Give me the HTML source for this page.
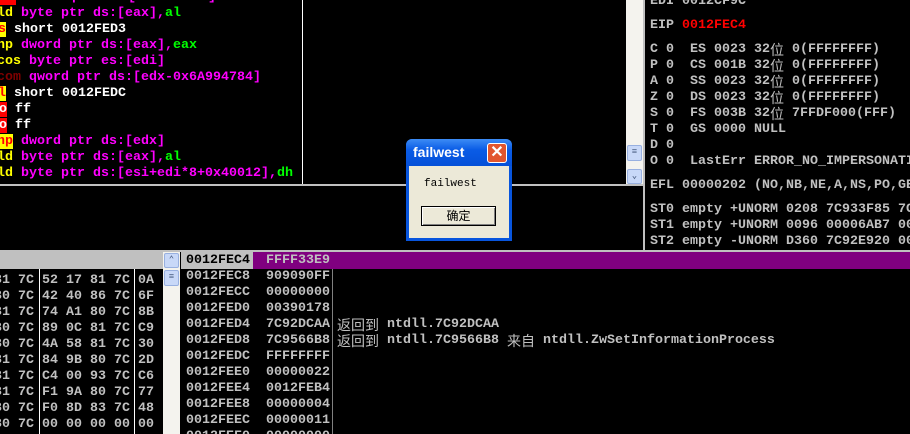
<!DOCTYPE html>
<html><head><meta charset="utf-8"><style>
*{margin:0;padding:0;box-sizing:border-box}
html{width:910px;height:434px;overflow:hidden}
body{width:910px;height:434px;background:#000;overflow:hidden;position:relative;font-family:"Liberation Mono","Noto Sans CJK SC",monospace;font-weight:bold;font-size:13.33px;}
.a{position:absolute;white-space:pre;line-height:16px;height:16px;overflow:visible}
.m{color:#ff00ff}.g{color:#00ff00}.w{color:#fff}.y{color:#ffff00}.r{color:#ff0000}.s{color:#c0c0c0}
.cjk{font-family:"Noto Sans CJK SC",sans-serif;font-weight:normal;font-size:14px;line-height:16px;display:inline-block;height:16px;vertical-align:top;overflow:hidden}
</style></head><body>
<!-- disasm -->
<div class="a" style="left:0;top:-10px"><span style="background:#ff0000;color:#ffff00">ll</span> <span class="m">dword ptr ds:[eax-0x6F0]</span></div>
<div class="a" style="left:-3px;top:6px"><span class="y">ld</span> <span class="m">byte ptr ds:[eax]</span><span class="m">,</span><span class="g">al</span></div>
<div class="a" style="left:-2px;top:22px"><span style="background:#ffff00;color:#ff0000">s</span> <span class="w">short 0012FED3</span></div>
<div class="a" style="left:-3px;top:38px"><span class="y">np</span> <span class="m">dword ptr ds:[eax],</span><span class="g">eax</span></div>
<div class="a" style="left:-3px;top:54px"><span class="y">cos</span> <span class="m">byte ptr es:[edi]</span></div>
<div class="a" style="left:-3px;top:70px"><span style="color:#800000">com</span> <span class="m">qword ptr ds:[edx-0x6A994784]</span></div>
<div class="a" style="left:-2px;top:86px"><span style="background:#ffff00;color:#ff0000">l</span> <span class="w">short 0012FEDC</span></div>
<div class="a" style="left:-1px;top:102px"><span style="background:#ff0000;color:#fff">o</span> <span class="w">ff</span></div>
<div class="a" style="left:-1px;top:118px"><span style="background:#ff0000;color:#fff">o</span> <span class="w">ff</span></div>
<div class="a" style="left:-3px;top:134px"><span style="background:#ffff00;color:#ff0000">np</span> <span class="m">dword ptr ds:[edx]</span></div>
<div class="a" style="left:-3px;top:150px"><span class="y">ld</span> <span class="m">byte ptr ds:[eax],</span><span class="g">al</span></div>
<div class="a" style="left:-3px;top:166px"><span class="y">ld</span> <span class="m">byte ptr ds:[esi+edi*8+0x40012],</span><span class="g">dh</span></div>
<div style="position:absolute;left:302px;top:0;width:1px;height:184px;background:#fff"></div>
<!-- disasm scrollbar -->
<div style="position:absolute;left:626px;top:0;width:17px;height:185px;background:#f4f3ee"></div>
<div style="position:absolute;left:627px;top:145px;width:15px;height:16px;background:#c8d8f8;border:1px solid #98b0e0;border-radius:2px;color:#4d6185;font-size:9px;line-height:13px;text-align:center">≡</div>
<div style="position:absolute;left:627px;top:169px;width:15px;height:15px;background:#c8d8f8;border:1px solid #98b0e0;border-radius:2px;color:#4d6185;font-size:9px;line-height:13px;text-align:center">⌄</div>
<div style="position:absolute;left:0;top:184px;width:644px;height:2px;background:#c0c0c0"></div>
<div style="position:absolute;left:643px;top:0;width:2px;height:251px;background:#c0c0c0"></div>
<!-- registers -->
<div style="position:absolute;left:645px;top:0;width:265px;height:250px;overflow:hidden">
<div class="a s" style="left:5px;top:-6px">EDI 0012CF9C</div>
<div class="a s" style="left:5px;top:18px">EIP <span class="r">0012FEC4</span></div>
<div class="a s" style="left:5px;top:42px">C 0  ES 0023 32<span class="cjk">位</span> 0(FFFFFFFF)</div>
<div class="a s" style="left:5px;top:58px">P 0  CS 001B 32<span class="cjk">位</span> 0(FFFFFFFF)</div>
<div class="a s" style="left:5px;top:74px">A 0  SS 0023 32<span class="cjk">位</span> 0(FFFFFFFF)</div>
<div class="a s" style="left:5px;top:90px">Z 0  DS 0023 32<span class="cjk">位</span> 0(FFFFFFFF)</div>
<div class="a s" style="left:5px;top:106px">S 0  FS 003B 32<span class="cjk">位</span> 7FFDF000(FFF)</div>
<div class="a s" style="left:5px;top:122px">T 0  GS 0000 NULL</div>
<div class="a s" style="left:5px;top:138px">D 0</div>
<div class="a s" style="left:5px;top:154px">O 0  LastErr ERROR_NO_IMPERSONATION_TOKEN</div>
<div class="a s" style="left:5px;top:178px">EFL 00000202 (NO,NB,NE,A,NS,PO,GE,G)</div>
<div class="a s" style="left:5px;top:202px">ST0 empty +UNORM 0208 7C933F85 7C</div>
<div class="a s" style="left:5px;top:218px">ST1 empty +UNORM 0096 00006AB7 00</div>
<div class="a s" style="left:5px;top:234px">ST2 empty -UNORM D360 7C92E920 00</div>
</div>
<div style="position:absolute;left:0;top:250px;width:910px;height:2px;background:#c0c0c0"></div>
<!-- dump -->
<div style="position:absolute;left:0;top:252px;width:163px;height:17px;background:#c0c0c0"></div>
<div style="position:absolute;left:39px;top:269px;width:1px;height:165px;background:#fff"></div>
<div style="position:absolute;left:134px;top:269px;width:1px;height:165px;background:#fff"></div>
<div class="a s" style="left:-6px;top:273px;height:160px;overflow:hidden">81 7C 52 17 81 7C 0A
80 7C 42 40 86 7C 6F
81 7C 74 A1 80 7C 8B
80 7C 89 0C 81 7C C9
80 7C 4A 58 81 7C 30
81 7C 84 9B 80 7C 2D
81 7C C4 00 93 7C C6
81 7C F1 9A 80 7C 77
80 7C F0 8D 83 7C 48
80 7C 00 00 00 00 00</div>
<div style="position:absolute;left:163px;top:252px;width:17px;height:182px;background:#f4f3ee"></div>
<div style="position:absolute;left:164px;top:253px;width:15px;height:15px;background:#c8d8f8;border:1px solid #98b0e0;border-radius:2px;color:#4d6185;font-size:9px;line-height:13px;text-align:center">⌃</div>
<div style="position:absolute;left:164px;top:270px;width:15px;height:16px;background:#c8d8f8;border:1px solid #98b0e0;border-radius:2px;color:#4d6185;font-size:9px;line-height:13px;text-align:center">≡</div>
<!-- stack -->
<div style="position:absolute;left:181px;top:252px;width:72px;height:17px;background:#c0c0c0"></div>
<div style="position:absolute;left:253px;top:252px;width:657px;height:17px;background:#800080"></div>
<div style="position:absolute;left:332px;top:269px;width:1px;height:165px;background:#808080"></div>
<div class="a" style="left:186px;top:253px;color:#000">0012FEC4</div>
<div class="a s" style="left:266px;top:253px">FFFF33E9</div>
<div class="a s" style="left:186px;top:269px;height:165px;overflow:hidden">0012FEC8
0012FECC
0012FED0
0012FED4
0012FED8
0012FEDC
0012FEE0
0012FEE4
0012FEE8
0012FEEC
0012FEF0</div>
<div class="a s" style="left:266px;top:269px;height:165px;overflow:hidden">909090FF
00000000
00390178
7C92DCAA
7C9566B8
FFFFFFFF
00000022
0012FEB4
00000004
00000011
00000000</div>
<div class="a s" style="left:337px;top:317px"><span class="cjk">返回到</span> ntdll.7C92DCAA</div>
<div class="a s" style="left:337px;top:333px"><span class="cjk">返回到</span> ntdll.7C9566B8 <span class="cjk">来自</span> ntdll.ZwSetInformationProcess</div>
<!-- dialog -->
<div style="position:absolute;left:406px;top:139px;width:106px;height:102px;background:#0855dd;border-radius:6px 6px 0 0"></div>
<div style="position:absolute;left:406px;top:139px;width:106px;height:27px;background:linear-gradient(#3d8cf5,#0a5ce6 40%,#0550d8);border-radius:6px 6px 0 0"></div>
<div style="position:absolute;left:413px;top:144px;color:#fff;font-family:'Liberation Sans',sans-serif;font-weight:bold;font-size:14px;line-height:16px">failwest</div>
<div style="position:absolute;left:487px;top:143px;width:20px;height:20px;background:#e2562f;border:1px solid #fff;border-radius:3px;color:#fff;font-family:'Liberation Sans',sans-serif;font-size:16px;line-height:18px;text-align:center">✕</div>
<div style="position:absolute;left:409px;top:166px;width:100px;height:72px;background:#ece9d8"></div>
<div style="position:absolute;left:424px;top:177px;font-family:'Liberation Mono',monospace;font-weight:normal;font-size:11px;line-height:14px;color:#000">failwest</div>
<div style="position:absolute;left:421px;top:206px;width:75px;height:20px;background:#ece9d8;border:1px solid #000;box-shadow:inset 1px 1px #fff,inset -1px -1px #808080;text-align:center;font-family:'Noto Sans CJK SC',sans-serif;font-weight:normal;font-size:12px;line-height:17px;color:#000">确定</div>
</body></html>
